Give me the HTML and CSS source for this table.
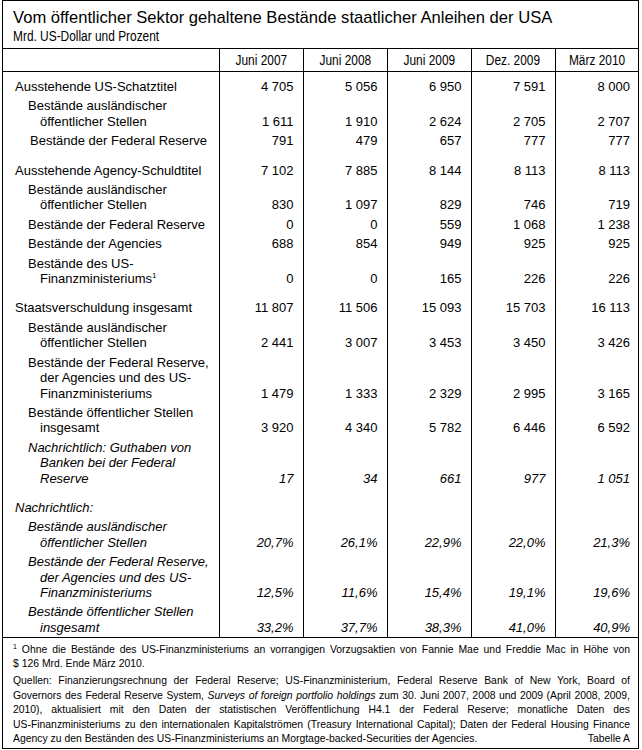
FILE: index.html
```html
<!DOCTYPE html>
<html lang="de">
<head>
<meta charset="utf-8">
<title>Bestände staatlicher Anleihen der USA</title>
<link rel="stylesheet" href="styles.css">
</head>
<body>
<div class="sheet">
  <div class="head">
    <div class="title">Vom öffentlicher Sektor gehaltene Bestände staatlicher Anleihen der USA</div>
    <div class="unit"><span class="narrow">Mrd. US-Dollar und Prozent</span></div>
  </div>
  <table class="data">
    <colgroup>
      <col class="c-label"><col class="c-num"><col class="c-num"><col class="c-num"><col class="c-num"><col class="c-num">
    </colgroup>
    <thead>
      <tr><th></th><th><span class="narrow">Juni 2007</span></th><th><span class="narrow">Juni 2008</span></th><th><span class="narrow">Juni 2009</span></th><th><span class="narrow">Dez. 2009</span></th><th><span class="narrow">März 2010</span></th></tr>
    </thead>
    <tbody>
      <tr class="first"><td class="main">Ausstehende US-Schatztitel</td><td>4 705</td><td>5 056</td><td>6 950</td><td>7 591</td><td>8 000</td></tr>
      <tr><td class="sub">Bestände ausländischer<br>öffentlicher Stellen</td><td>1 611</td><td>1 910</td><td>2 624</td><td>2 705</td><td>2 707</td></tr>
      <tr><td class="sub sub-b">Bestände der Federal Reserve</td><td>791</td><td>479</td><td>657</td><td>777</td><td>777</td></tr>
      <tr class="gap"><td></td><td></td><td></td><td></td><td></td><td></td></tr>
      <tr><td class="main">Ausstehende Agency-Schuldtitel</td><td>7 102</td><td>7 885</td><td>8 144</td><td>8 113</td><td>8 113</td></tr>
      <tr><td class="sub">Bestände ausländischer<br>öffentlicher Stellen</td><td>830</td><td>1 097</td><td>829</td><td>746</td><td>719</td></tr>
      <tr><td class="sub">Bestände der Federal Reserve</td><td>0</td><td>0</td><td>559</td><td>1 068</td><td>1 238</td></tr>
      <tr><td class="sub">Bestände der Agencies</td><td>688</td><td>854</td><td>949</td><td>925</td><td>925</td></tr>
      <tr><td class="sub">Bestände des US-<br>Finanzministeriums<sup>1</sup></td><td>0</td><td>0</td><td>165</td><td>226</td><td>226</td></tr>
      <tr class="gap"><td></td><td></td><td></td><td></td><td></td><td></td></tr>
      <tr><td class="main">Staatsverschuldung insgesamt</td><td>11 807</td><td>11 506</td><td>15 093</td><td>15 703</td><td>16 113</td></tr>
      <tr><td class="sub">Bestände ausländischer<br>öffentlicher Stellen</td><td>2 441</td><td>3 007</td><td>3 453</td><td>3 450</td><td>3 426</td></tr>
      <tr><td class="sub">Bestände der Federal Reserve,<br>der Agencies und des US-<br>Finanzministeriums</td><td>1 479</td><td>1 333</td><td>2 329</td><td>2 995</td><td>3 165</td></tr>
      <tr><td class="sub">Bestände öffentlicher Stellen<br>insgesamt</td><td>3 920</td><td>4 340</td><td>5 782</td><td>6 446</td><td>6 592</td></tr>
      <tr class="it"><td class="sub">Nachrichtlich: Guthaben von<br>Banken bei der Federal<br>Reserve</td><td>17</td><td>34</td><td>661</td><td>977</td><td>1 051</td></tr>
      <tr class="gap"><td></td><td></td><td></td><td></td><td></td><td></td></tr>
      <tr class="it"><td class="main">Nachrichtlich:</td><td></td><td></td><td></td><td></td><td></td></tr>
      <tr class="it"><td class="sub">Bestände ausländischer<br>öffentlicher Stellen</td><td>20,7%</td><td>26,1%</td><td>22,9%</td><td>22,0%</td><td>21,3%</td></tr>
      <tr class="it"><td class="sub">Bestände der Federal Reserve,<br>der Agencies und des US-<br>Finanzministeriums</td><td>12,5%</td><td>11,6%</td><td>15,4%</td><td>19,1%</td><td>19,6%</td></tr>
      <tr class="it last"><td class="sub">Bestände öffentlicher Stellen<br>insgesamt</td><td>33,2%</td><td>37,7%</td><td>38,3%</td><td>41,0%</td><td>40,9%</td></tr>
    </tbody>
  </table>
  <div class="notes">
    <div class="fn">
      <span class="ln"><sup>1</sup> Ohne die Bestände des US-Finanzministeriums an vorrangigen Vorzugsaktien von Fannie Mae und Freddie Mac in Höhe von</span>
      <span class="ln ln-end">$ 126 Mrd. Ende März 2010.</span>
    </div>
    <div class="src">
      <span class="ln">Quellen: Finanzierungsrechnung der Federal Reserve; US-Finanzministerium, Federal Reserve Bank of New York, Board of</span>
      <span class="ln">Governors des Federal Reserve System, <i>Surveys of foreign portfolio holdings</i> zum 30. Juni 2007, 2008 und 2009 (April 2008, 2009,</span>
      <span class="ln">2010), aktualisiert mit den Daten der statistischen Veröffentlichung H4.1 der Federal Reserve; monatliche Daten des</span>
      <span class="ln">US-Finanzministeriums zu den internationalen Kapitalströmen (Treasury International Capital); Daten der Federal Housing Finance</span>
      <div class="last-line">
        <span>Agency zu den Beständen des US-Finanzministeriums an Morgtage-backed-Securities der Agencies.</span>
        <span>Tabelle A</span>
      </div>
    </div>
  </div>
</div>
</body>
</html>
```

FILE: styles.css
```css
html, body {
  margin: 0;
  padding: 0;
  background: #fff;
}
body {
  font-family: "Liberation Sans", Arial, sans-serif;
  color: #000;
}
.sheet {
  margin-left: 2px;
  width: 637px;
  border: 1px solid #000;
  box-sizing: border-box;
}
.head {
  padding: 7px 0 4px 10px;
  border-bottom: 1px solid #000;
}
.title {
  font-size: 16.6px;
  line-height: 20px;
}
.unit {
  font-size: 14px;
  line-height: 16px;
  white-space: nowrap;
}
.narrow {
  display: inline-block;
  transform: scaleX(0.85);
  transform-origin: left center;
}
.data {
  width: 100%;
  border-collapse: collapse;
  table-layout: fixed;
  font-size: 13px;
}
.c-label { width: 216px; }
.c-num { width: 84px; }
.data th {
  font-weight: normal;
  font-size: 14px;
  height: 22px;
  padding: 0;
  text-align: center;
  border-bottom: 1px solid #000;
  white-space: nowrap;
}
.data th .narrow {
  transform-origin: center center;
}
.data th + th, .data td + td {
  border-left: 1px solid #000;
}
.data td {
  padding: 2px 9px 2px 0;
  line-height: 15.4px;
  text-align: right;
  vertical-align: bottom;
  white-space: nowrap;
}
.data td.main {
  text-align: left;
  padding-left: 12px;
}
.data td.sub {
  text-align: left;
  padding-left: 37px;
  text-indent: -12px;
}
.data td.sub-b { padding-left: 39px; }
.data tr.first td { padding-top: 7px; }
.data tr.gap td { height: 10px; padding: 0; }
.data tr.last td { padding-bottom: 2px; }
.data tr.it td { font-style: italic; }
.data sup {
  font-size: 8px;
  line-height: 0;
  vertical-align: 5px;
}
.notes {
  border-top: 1px solid #000;
  padding: 5px 8px 1px 10px;
  font-size: 10.4px;
}
.ln {
  display: block;
  text-align: justify;
  text-align-last: justify;
}
.ln-end {
  text-align: left;
  text-align-last: left;
}
.fn {
  line-height: 14px;
  margin-bottom: 3px;
}
.fn sup {
  font-size: 7px;
  line-height: 0;
  vertical-align: 4px;
}
.src {
  line-height: 14.5px;
}
.last-line {
  display: flex;
  justify-content: space-between;
}
```
